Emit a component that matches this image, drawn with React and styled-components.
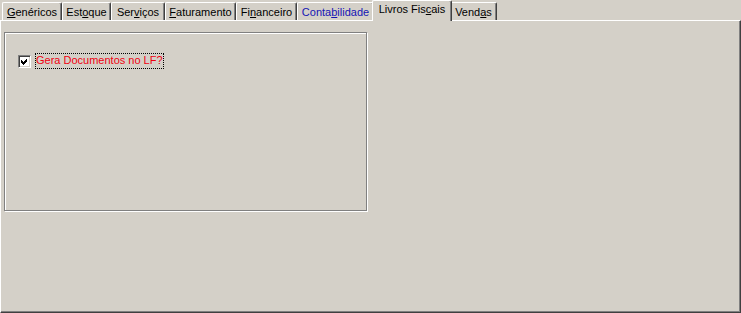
import React from "react";
import styled, { createGlobalStyle } from "styled-components";

const Global = createGlobalStyle`
  html, body { margin: 0; padding: 0; background: #d4d0c8; }
  body { font-family: "Liberation Sans", Arial, sans-serif; font-size: 11px; }
`;

const Window = styled.div`
  width: 741px;
  height: 313px;
  display: flex;
  flex-direction: column;
  background: #d4d0c8;
  overflow: hidden;
`;

const TabStrip = styled.div`
  height: 20px;
  display: flex;
  align-items: flex-end;
  padding-left: 2px;
  position: relative;
  z-index: 2;
`;

const Tab = styled.div`
  box-sizing: border-box;
  width: ${(p) => p.$w}px;
  height: ${(p) => (p.$active ? 21 : 18)}px;
  margin: ${(p) => (p.$active ? "0 -2px -1px -2px" : "0")};
  padding-top: ${(p) => (p.$active ? 2 : 3)}px;
  background: #d4d0c8;
  border-top: 1px solid #ffffff;
  border-left: 1px solid #ffffff;
  border-right: 1px solid #404040;
  box-shadow: inset -1px 0 0 #808080;
  border-radius: 2px 2px 0 0;
  text-align: center;
  white-space: nowrap;
  color: ${(p) => p.$color || "#000"};
  line-height: 13px;
  position: relative;
  z-index: ${(p) => (p.$active ? 3 : 1)};
`;

const Key = styled.span`
  text-decoration: underline;
  text-underline-offset: 1px;
`;

const Panel = styled.div`
  flex: 1;
  box-sizing: border-box;
  border-top: 1px solid #ffffff;
  border-left: 1px solid #ffffff;
  border-right: 1px solid #404040;
  border-bottom: 1px solid #404040;
  box-shadow: inset -1px -1px 0 #808080;
  padding: 11px 0 0 3px;
  position: relative;
  z-index: 1;
`;

const GroupBox = styled.div`
  box-sizing: border-box;
  width: 363px;
  height: 179px;
  border: 1px solid #808080;
  box-shadow: 1px 1px 0 #ffffff, inset 1px 1px 0 #ffffff;
  padding: 20px 0 0 13px;
`;

const CheckRow = styled.label`
  display: flex;
  align-items: center;
  gap: 4px;
`;

const Box = styled.span`
  box-sizing: border-box;
  width: 13px;
  height: 13px;
  background: #ffffff;
  border-top: 1px solid #808080;
  border-left: 1px solid #808080;
  border-right: 1px solid #ffffff;
  border-bottom: 1px solid #ffffff;
  box-shadow: inset 1px 1px 0 #404040, inset -1px -1px 0 #d4d0c8;
  display: flex;
  align-items: center;
  justify-content: center;
`;

const Label = styled.span`
  color: #f00010;
  padding: 1px 1px 2px 1px;
  outline: 1px dotted #000;
  outline-offset: -1px;
  line-height: 13px;
`;

const tabs = [
  { w: 60, parts: [["G", true], ["enéricos"]] },
  { w: 49, parts: [["Est"], ["o", true], ["que"]] },
  { w: 54, parts: [["Ser"], ["v", true], ["iços"]] },
  { w: 71, parts: [["F", true], ["aturamento"]] },
  { w: 61, parts: [["Fi"], ["n", true], ["anceiro"]] },
  { w: 77, color: "#1414b4", parts: [["Conta"], ["b", true], ["ilidade"]] },
  { w: 80, active: true, parts: [["Livros Fis"], ["c", true], ["ais"]] },
  { w: 47, parts: [["Vend"], ["a", true], ["s"]] },
];

export default function App() {
  return (
    <Window>
      <Global />
      <TabStrip>
        {tabs.map((t, i) => (
          <Tab key={i} $w={t.w} $active={t.active} $color={t.color}>
            {t.parts.map(([s, k], j) => (k ? <Key key={j}>{s}</Key> : <span key={j}>{s}</span>))}
          </Tab>
        ))}
      </TabStrip>
      <Panel>
        <GroupBox>
          <CheckRow>
            <Box>
              <svg width="7" height="7" viewBox="0 0 7 7" shapeRendering="crispEdges">
                <path d="M0 2 L2 4 L6 0 L6 3 L2 7 L0 5 Z" fill="#000" />
              </svg>
            </Box>
            <Label>Gera Documentos no LF?</Label>
          </CheckRow>
        </GroupBox>
      </Panel>
    </Window>
  );
}
